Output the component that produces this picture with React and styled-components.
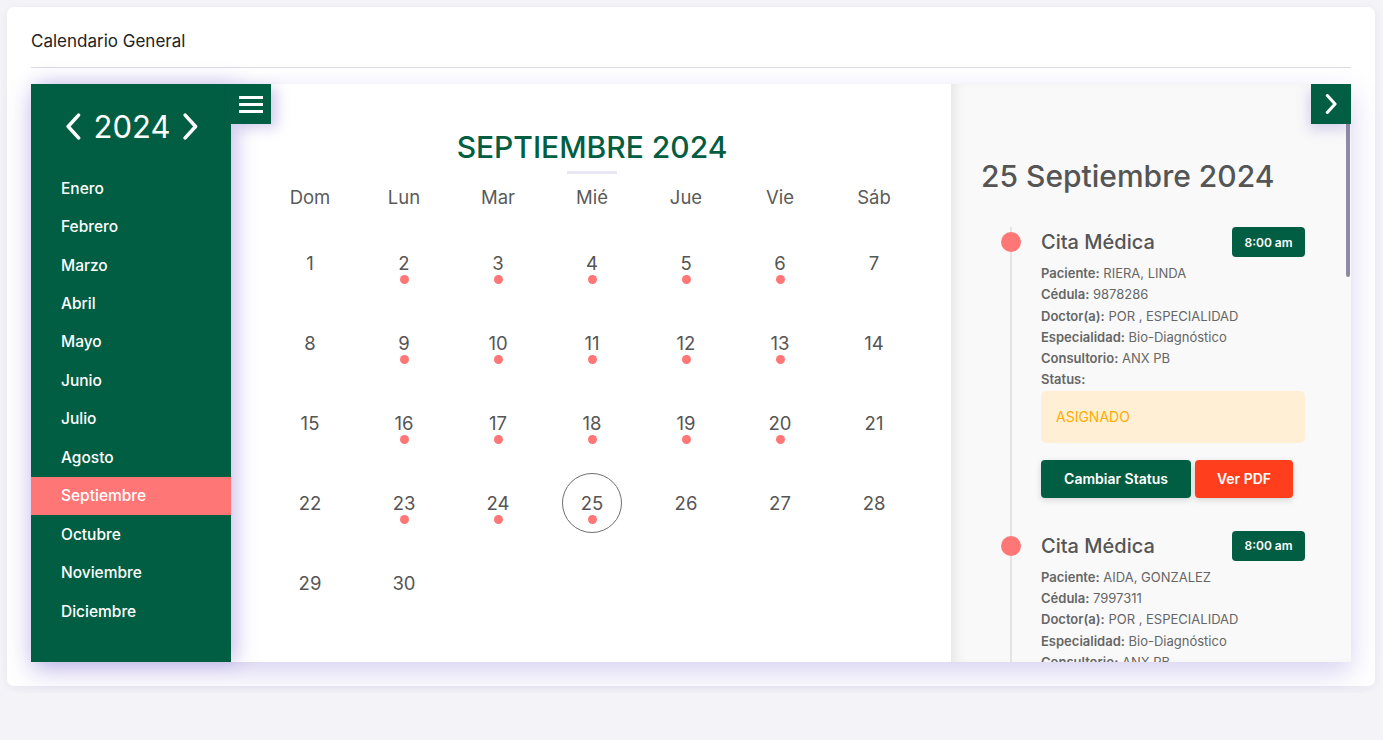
import { createGlobalStyle } from 'styled-components';
import styled from 'styled-components';

const GREEN = '#025e42';
const SALMON = '#ff7676';

const Global = createGlobalStyle`
  body {
    margin: 0;
    background: #f4f3f8;
    font-family: "Inter", "Liberation Sans", sans-serif;
    color: #555;
  }
`;

const meses = ['Enero', 'Febrero', 'Marzo', 'Abril', 'Mayo', 'Junio', 'Julio', 'Agosto', 'Septiembre', 'Octubre', 'Noviembre', 'Diciembre'];
const dias = ['Dom', 'Lun', 'Mar', 'Mié', 'Jue', 'Vie', 'Sáb'];
const conCita = [2, 3, 4, 5, 6, 9, 10, 11, 12, 13, 16, 17, 18, 19, 20, 23, 24, 25];

const citas = [
  { paciente: 'RIERA, LINDA', cedula: '9878286', consultorio: 'ANX PB' },
  { paciente: 'AIDA, GONZALEZ', cedula: '7997311', consultorio: 'ANX PB' },
  { paciente: 'PEREZ, MARIA', cedula: '8123456', consultorio: 'ANX PB' },
];

function Chevron({ left, size = 26, stroke = 3.2 }) {
  return (
    <svg width={size * 0.62} height={size} viewBox="0 0 16 26" fill="none">
      <path
        d={left ? 'M13 2 L3 13 L13 24' : 'M3 2 L13 13 L3 24'}
        stroke="#fff"
        strokeWidth={stroke}
        strokeLinecap="round"
        strokeLinejoin="round"
      />
    </svg>
  );
}

export default function App() {
  return (
    <>
      <Global />
      <Card>
        <Header>Calendario General</Header>
        <Calendario>
          <Sidebar>
            <YearRow>
              <Chevron left size={27} stroke={3.4} />
              <span>2024</span>
              <Chevron size={27} stroke={3.4} />
            </YearRow>
            {meses.map((m) => (
              <Mes key={m} $activo={m === 'Septiembre'}>{m}</Mes>
            ))}
            <MenuBtn>
              <Bar />
              <Bar />
              <Bar />
            </MenuBtn>
          </Sidebar>

          <Centro>
            <Titulo>SEPTIEMBRE 2024</Titulo>
            <Subrayado />
            <Grid>
              {dias.map((d) => (
                <DiaSemana key={d}>{d}</DiaSemana>
              ))}
            </Grid>
            <Grid>
              {Array.from({ length: 30 }, (_, i) => i + 1).map((n) => (
                <Dia key={n}>
                  <Numero $sel={n === 25}>{n}</Numero>
                  {conCita.includes(n) && <Punto />}
                </Dia>
              ))}
            </Grid>
          </Centro>

          <Detalle>
            <NextBtn>
              <Chevron size={20} stroke={4} />
            </NextBtn>
            <Thumb />
            <FechaTitulo>25 Septiembre 2024</FechaTitulo>
            <Timeline>
              {citas.map((c, i) => (
                <Item key={i}>
                  <ItemDot />
                  <ItemHead>
                    <ItemTitulo>Cita Médica</ItemTitulo>
                    <Hora>8:00 am</Hora>
                  </ItemHead>
                  <Linea><b>Paciente:</b> {c.paciente}</Linea>
                  <Linea><b>Cédula:</b> {c.cedula}</Linea>
                  <Linea><b>Doctor(a):</b> POR , ESPECIALIDAD</Linea>
                  <Linea><b>Especialidad:</b> Bio-Diagnóstico</Linea>
                  <Linea><b>Consultorio:</b> {c.consultorio}</Linea>
                  <Linea><b>Status:</b></Linea>
                  <Estado>ASIGNADO</Estado>
                  <Botones>
                    <Boton $color={GREEN} $w={150}>Cambiar Status</Boton>
                    <Boton $color="#ff3e1d" $w={98}>Ver PDF</Boton>
                  </Botones>
                </Item>
              ))}
            </Timeline>
          </Detalle>
        </Calendario>
      </Card>
    </>
  );
}

const Card = styled.div`
  margin: 7px 8px 7px 7px;
  background: #fff;
  border-radius: 7px;
  padding: 0 24px 24px;
  box-shadow: 0 2px 8px rgba(60, 50, 120, 0.06);
`;

const Header = styled.div`
  font-size: 17px;
  line-height: 24px;
  color: #222;
  padding: 22px 0 14px;
  border-bottom: 1px solid #dcdbe2;
  margin-bottom: 16px;
`;

const Calendario = styled.div`
  display: flex;
  height: 578px;
  box-shadow: 0 10px 26px rgba(110, 90, 200, 0.28);
`;

const Sidebar = styled.div`
  position: relative;
  width: 200px;
  flex: none;
  background: ${GREEN};
  color: #fff;
  z-index: 2;
  box-shadow: 6px 0 18px rgba(110, 90, 200, 0.35);
`;

const YearRow = styled.div`
  height: 85px;
  display: flex;
  align-items: center;
  justify-content: center;
  gap: 12px;
  font-size: 31px;
  padding-left: 2px;
`;

const Mes = styled.div`
  height: 38.45px;
  display: flex;
  align-items: center;
  padding-left: 30px;
  font-size: 15.5px;
  font-weight: 500;
  background: ${(p) => (p.$activo ? SALMON : 'transparent')};
`;

const MenuBtn = styled.div`
  position: absolute;
  top: 0;
  left: 200px;
  width: 40px;
  height: 40px;
  background: ${GREEN};
  display: flex;
  flex-direction: column;
  justify-content: center;
  align-items: center;
  gap: 4px;
  box-shadow: 6px 4px 12px rgba(110, 90, 200, 0.3);
`;

const Bar = styled.span`
  width: 24px;
  height: 3px;
  background: #fff;
`;

const Centro = styled.div`
  flex: 1;
  background: #fff;
  padding: 45px 30px 0 32px;
`;

const Titulo = styled.div`
  text-align: center;
  font-size: 30px;
  line-height: 36px;
  font-weight: 500;
  color: ${GREEN};
`;

const Subrayado = styled.div`
  width: 50px;
  height: 3px;
  background: #e9e6f5;
  margin: 6px auto 3px;
`;

const Grid = styled.div`
  display: grid;
  grid-template-columns: repeat(7, 94px);
`;

const DiaSemana = styled.div`
  height: 40px;
  margin-bottom: 6px;
  display: flex;
  align-items: center;
  justify-content: center;
  font-size: 18.5px;
  color: #5a5a5a;
`;

const Dia = styled.div`
  position: relative;
  height: 80px;
  display: flex;
  align-items: center;
  justify-content: center;
`;

const Numero = styled.div`
  width: 60px;
  height: 60px;
  border-radius: 50%;
  display: flex;
  align-items: center;
  justify-content: center;
  font-size: 18.5px;
  color: #555;
  border: 1px solid ${(p) => (p.$sel ? '#6f6f6f' : 'transparent')};
  box-sizing: border-box;
`;

const Punto = styled.span`
  position: absolute;
  top: 52px;
  left: 50%;
  margin-left: -4.5px;
  width: 9px;
  height: 9px;
  border-radius: 50%;
  background: ${SALMON};
`;

const Detalle = styled.div`
  position: relative;
  width: 400px;
  flex: none;
  background: #f9f9f9;
  overflow: hidden;
  padding-left: 30px;
  box-sizing: border-box;
  box-shadow: inset 10px 0 14px -8px rgba(0, 0, 0, 0.1);
`;

const NextBtn = styled.div`
  position: absolute;
  top: 0;
  right: 0;
  width: 40px;
  height: 40px;
  background: ${GREEN};
  display: flex;
  align-items: center;
  justify-content: center;
  z-index: 3;
  box-shadow: -2px 6px 12px rgba(110, 90, 200, 0.25);
`;

const Thumb = styled.div`
  position: absolute;
  top: 0;
  right: 1px;
  width: 4px;
  height: 193px;
  border-radius: 0 0 3px 3px;
  background: #8f8aa6;
  z-index: 2;
`;

const FechaTitulo = styled.div`
  margin-top: 74px;
  font-size: 30px;
  line-height: 36px;
  font-weight: 500;
  color: #555;
`;

const Timeline = styled.div`
  margin-top: 33px;
  padding-left: 60px;
  position: relative;
  &::before {
    content: '';
    position: absolute;
    left: 29px;
    top: 0;
    bottom: 0;
    width: 2px;
    background: #e4e4e4;
  }
`;

const Item = styled.div`
  position: relative;
  width: 264px;
  padding-bottom: 33px;
`;

const ItemDot = styled.span`
  position: absolute;
  left: -40px;
  top: 5px;
  width: 20px;
  height: 20px;
  border-radius: 50%;
  background: ${SALMON};
`;

const ItemHead = styled.div`
  display: flex;
  justify-content: space-between;
  align-items: center;
  height: 30px;
  margin-bottom: 6px;
`;

const ItemTitulo = styled.div`
  font-size: 20px;
  font-weight: 500;
  color: #555;
`;

const Hora = styled.div`
  width: 73px;
  height: 30px;
  border-radius: 4px;
  background: ${GREEN};
  color: #fff;
  font-size: 12px;
  font-weight: 600;
  display: flex;
  align-items: center;
  justify-content: center;
`;

const Linea = styled.div`
  font-size: 13px;
  line-height: 21.3px;
  color: #666;
  b {
    font-weight: 600;
  }
`;

const Estado = styled.div`
  height: 52px;
  border-radius: 5px;
  background: #fff0d5;
  color: #ffab00;
  font-size: 14px;
  display: flex;
  align-items: center;
  padding-left: 15px;
`;

const Botones = styled.div`
  display: flex;
  gap: 4px;
  margin-top: 17px;
`;

const Boton = styled.div`
  width: ${(p) => p.$w}px;
  height: 38px;
  border-radius: 4px;
  background: ${(p) => p.$color};
  color: #fff;
  font-size: 14px;
  font-weight: 600;
  display: flex;
  align-items: center;
  justify-content: center;
  box-shadow: 0 2px 6px rgba(0, 0, 0, 0.15);
`;
